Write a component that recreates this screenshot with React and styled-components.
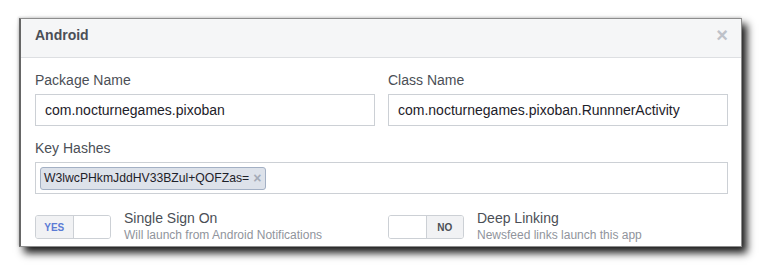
import React from "react";
import styled, { createGlobalStyle } from "styled-components";

const Global = createGlobalStyle`
  body {
    margin: 0;
    background: #fff;
    font-family: "Liberation Sans", Arial, sans-serif;
  }
`;

const Page = styled.div`
  padding: 18px 0 0 19px;
  height: 268px;
  box-sizing: border-box;
`;

const Dialog = styled.div`
  width: 723px;
  height: 229px;
  box-sizing: border-box;
  background: #fff;
  border: 1px solid #8d8d8d;
  border-left: 2px solid #666;
  box-shadow: 5px 6px 8px rgba(0, 0, 0, 0.9), -1px -1px 2px rgba(0, 0, 0, 0.15);
  overflow: hidden;
`;

const Header = styled.div`
  height: 39px;
  box-sizing: border-box;
  background: #f5f6f7;
  border-bottom: 1px solid #dddfe2;
  display: flex;
  align-items: flex-start;
  justify-content: space-between;
  padding: 7px 13px 0 14px;
`;

const Title = styled.h2`
  margin: 0;
  font-size: 14px;
  line-height: 18px;
  font-weight: bold;
  color: #4b4f56;
`;

const Close = styled.span`
  font-size: 20px;
  font-weight: bold;
  color: #bec2c9;
  line-height: 18px;
`;

const Body = styled.div`
  padding: 13px 13px 0 14px;
  display: flex;
  flex-direction: column;
  gap: 13px;
`;

const Row = styled.div`
  display: grid;
  grid-template-columns: 1fr 1fr;
  column-gap: 13px;
`;

const Field = styled.div`
  display: flex;
  flex-direction: column;
`;

const Label = styled.label`
  font-size: 14px;
  line-height: 18px;
  color: #4b4f56;
  margin-bottom: 5px;
`;

const Input = styled.div`
  height: 32px;
  box-sizing: border-box;
  border: 1px solid #ccd0d5;
  display: flex;
  align-items: center;
  padding: 0 ${(p) => (p.tokens ? "4px" : "9px")};
  font-size: 14px;
  color: #1d2129;
`;

const Token = styled.span`
  display: inline-flex;
  align-items: center;
  gap: 4px;
  height: 23px;
  box-sizing: border-box;
  padding: 0 4px 0 3px;
  background: #dde2ea;
  border: 1px solid #a3b0c4;
  border-radius: 3px;
  font-size: 12.2px;
  color: #1d2129;
`;

const TokenX = styled.span`
  color: #a4abb7;
  font-size: 14px;
  font-weight: bold;
`;

const ToggleRow = styled.div`
  display: flex;
  align-items: flex-start;
  gap: 13px;
  padding-top: 8px;
`;

const Switch = styled.div`
  width: 76px;
  height: 24px;
  box-sizing: border-box;
  border: 1px solid #ccd0d5;
  border-radius: 3px;
  display: flex;
  flex-direction: ${(p) => (p.on ? "row" : "row-reverse")};
  overflow: hidden;
  flex-shrink: 0;
`;

const SwitchState = styled.span`
  flex: 1;
  background: #f1f2f4;
  color: ${(p) => (p.on ? "#5b7bd5" : "#4b4f56")};
  font-size: 10px;
  font-weight: bold;
  display: flex;
  align-items: center;
  justify-content: center;
`;

const Knob = styled.span`
  flex: 1;
  background: #fff;
  border-${(p) => (p.on ? "left" : "right")}: 1px solid #ccd0d5;
`;

const ToggleText = styled.div`
  display: flex;
  flex-direction: column;
  margin-top: -6px;
`;

const ToggleTitle = styled.span`
  font-size: 14px;
  line-height: 18px;
  color: #4b4f56;
`;

const ToggleHint = styled.span`
  font-size: 12px;
  line-height: 17px;
  color: #90949c;
`;

const Toggle = ({ on, title, hint }) => (
  <ToggleRow>
    <Switch on={on}>
      <SwitchState on={on}>{on ? "YES" : "NO"}</SwitchState>
      <Knob on={on} />
    </Switch>
    <ToggleText>
      <ToggleTitle>{title}</ToggleTitle>
      <ToggleHint>{hint}</ToggleHint>
    </ToggleText>
  </ToggleRow>
);

export default function App() {
  return (
    <Page>
      <Global />
      <Dialog>
        <Header>
          <Title>Android</Title>
          <Close>×</Close>
        </Header>
        <Body>
          <Row>
            <Field>
              <Label>Package Name</Label>
              <Input>com.nocturnegames.pixoban</Input>
            </Field>
            <Field>
              <Label>Class Name</Label>
              <Input>com.nocturnegames.pixoban.RunnnerActivity</Input>
            </Field>
          </Row>
          <Field>
            <Label>Key Hashes</Label>
            <Input tokens>
              <Token>
                W3lwcPHkmJddHV33BZul+QOFZas=<TokenX>×</TokenX>
              </Token>
            </Input>
          </Field>
          <Row>
            <Toggle on title="Single Sign On" hint="Will launch from Android Notifications" />
            <Toggle title="Deep Linking" hint="Newsfeed links launch this app" />
          </Row>
        </Body>
      </Dialog>
    </Page>
  );
}
